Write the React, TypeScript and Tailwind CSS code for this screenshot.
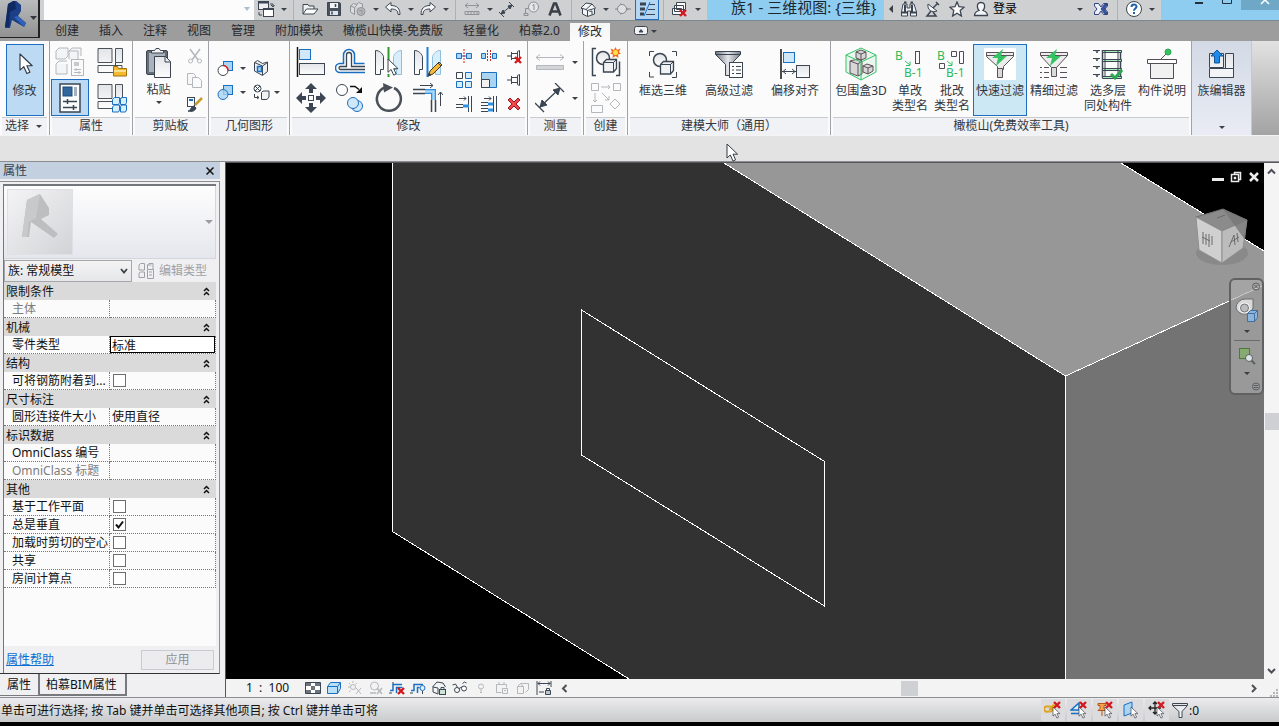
import { Fragment, type ReactNode } from "react";
import clsx from "clsx";

/* ---------- helpers ---------- */

const INK = "#3b4652";
const BLUE = "#1b6fc0";
const SKY = "#a9d5f3";
const FAINT = "#b4b8bc";

function Svg({ w = 16, h = 16, stroke = INK, children }: { w?: number; h?: number; stroke?: string; children: ReactNode }) {
  return (
    <svg width={w} height={h} viewBox={`0 0 ${w} ${h}`} fill="none" stroke={stroke} className="shrink-0" aria-hidden="true">
      {children}
    </svg>
  );
}

function Caret({ className = "w-[11px]" }: { className?: string }) {
  return (
    <span className={clsx("flex shrink-0 items-center justify-center", className)}>
      <svg width="6" height="3" viewBox="0 0 6 3" aria-hidden="true">
        <path d="M0 0h6L3 3z" fill="#3b3f46" />
      </svg>
    </span>
  );
}

function Arrow({ x = 0, y = 0, scale = 1 }: { x?: number; y?: number; scale?: number }) {
  return (
    <path
      d="M0 0V14L3.3 11L6 17L8.6 15.8L6 10.2H10.6Z"
      transform={`translate(${x} ${y}) scale(${scale})`}
      fill="#fff"
      stroke="#333a44"
      strokeLinejoin="round"
    />
  );
}

function RedX({ x = 0, y = 0, s = 7 }: { x?: number; y?: number; s?: number }) {
  return (
    <path d={`M${x} ${y}l${s} ${s}M${x + s} ${y}l${-s} ${s}`} stroke="#d3191f" strokeWidth="2.4" />
  );
}

/* ---------- quick access icons ---------- */

const switchWindows = (
  <Svg w={18} h={18}>
    <rect x="1.5" y="1.5" width="10" height="8" fill="#eee" />
    <path d="M1 2.5h11" strokeWidth="2" />
    <rect x="6.5" y="8.5" width="10" height="8" fill="#fff" />
    <path d="M6 9.5h11M13 4h3v3M14 5l2 2l1.500-2M2 12v3h3" />
  </Svg>
);
const openIcon = (
  <Svg w={18}>
    <path d="M2 13V3.500h5l1 1.500h5v3" fill="#eef0f2" />
    <path d="M2 13l3.500-5H17l-4 5z" fill="#fff" />
  </Svg>
);
const saveIcon = (
  <Svg w={16}>
    <path d="M1.500 1.500h12l1 1v12h-13z" fill="#48525e" />
    <path d="M4 2h8v5H4z" fill="#f2f4f6" stroke="none" />
    <path d="M4 10h8v4H4z" fill="#dfe5ea" stroke="none" />
    <path d="M9.500 3v3M6 10.500v3" strokeWidth="1.500" />
  </Svg>
);
const syncIcon = (
  <Svg w={18} stroke="#8f9499">
    <path d="M1.500 5l3-2.500 3 1 2-2 4 1.500v4M1.500 5v6l4 2.500M1.500 5l4 1.500v7M5.500 6.500l3-3" fill="#dcdddf" />
    <circle cx="12" cy="10.500" r="4" fill="#b5b8bb" />
    <path d="M10 10l3-1v4" />
  </Svg>
);
const undoIcon = (
  <Svg w={18}>
    <path d="M1.500 6L7 1.500v3c6 0 9 3 9 9h-2c0-4-2-5.500-7-5.500v3z" fill="#f6f7f8" />
  </Svg>
);
const redoIcon = (
  <Svg w={18}>
    <path d="M16.500 6L11 1.500v3c-6 0-9 3-9 9h2c0-4 2-5.500 7-5.500v3z" fill="#f6f7f8" />
  </Svg>
);
const rulerIcon = (
  <Svg stroke="#8e9398">
    <path d="M1 4.500h14M4 2L1 4.500 4 7M12 2l3 2.500L12 7M1 10.500h14v3H1zM4 11v2M7 11v2M10 11v2M13 11v2" />
  </Svg>
);
const alignedDim = (
  <Svg w={18}>
    <path d="M3 13L14 4M1 11l5 5M11 1l5 5" />
    <path d="M3 13l2-4 2 3zM14 4l-4 1 2 3z" fill={INK} />
  </Svg>
);
const tagIcon = (
  <Svg stroke="#8b8f94">
    <circle cx="10.500" cy="6" r="5" fill="#e5e5e6" />
    <path d="M9.500 4.500l1.500-1v5.500M5.500 7.500h-3v5M1 12.500h4v2H1z" />
  </Svg>
);
const boldA = (
  <Svg w={14} stroke="#3b4048">
    <path d="M1.500 14.500L6 2.500h2l4.500 12M3.500 10.500h7" strokeWidth="2.600" />
  </Svg>
);
const homeIcon = (
  <Svg>
    <path d="M1 7l5-5 6 1 3.500 4-1 1v5l-7 2.500-5-2.500V8z" fill="#f3f5f6" strokeLinejoin="round" />
    <path d="M1 7l5 1.500L12 3M7.500 9v6M6 8.500l1.500 1 7-2M9.500 10.500l2.500-.5v3.500" />
  </Svg>
);
const sectionIcon = (
  <Svg stroke="#85898e">
    <path d="M5 2l9 6-9 6z" fill="#9b9fa3" stroke="none" />
    <circle cx="7" cy="8" r="4.500" fill="#dedfe0" />
    <path d="M0 8h2M12 8h4" />
  </Svg>
);
const thinLines = (
  <Svg w={18}>
    <path d="M2 3h6M2 8h5M2 13h4" strokeWidth="3" />
    <path d="M11 3.500h6M10 8.500h7M8 13.500h9" />
    <path d="M12 1L6 15" stroke="#1676d2" />
  </Svg>
);
const closeHidden = (
  <Svg w={18}>
    <path d="M5.500 1.500h9v7h-9zM3.500 4.500h9v6h-9zM1.500 7.500h9v6h-9z" fill="#fbfbfb" />
    <RedX x={9} y={9} s={6} />
  </Svg>
);
const binoculars = (
  <Svg w={18} h={18}>
    <path d="M3 4h4v4h3V4h4l2.500 8v4h-6v-5h-3v5h-6v-4z" fill="#f2f4f5" />
    <path d="M4 2.500h2.500M10.500 2.500H13M1.500 12.500h6M10.500 12.500h6M5 5v7M12 5v7" strokeWidth="2" />
  </Svg>
);
const dish = (
  <Svg>
    <path d="M3 3c-1 6 4 9 9 7z" fill="#f4f6f7" />
    <path d="M8 7l5-5M11 1l3 3M6 10l-4 5h9l-3-4" strokeWidth="1.500" />
  </Svg>
);
const star = (
  <Svg>
    <path d="M8 1l2 4.700 5 .5-3.800 3.400L12.400 15 8 12.200 3.600 15l1.200-5.400L1 6.200l5-.5z" fill="#fafafa" strokeWidth="1.300" />
  </Svg>
);
const user = (
  <Svg>
    <path d="M8 1.500c-3 0-4 2-3.500 5 .3 1.500 1 2.500 1.500 3-3 1-4.500 2-4.500 5h13c0-3-1.500-4-4.500-5 .5-.5 1.200-1.500 1.500-3 .5-3-.5-5-3.500-5z" fill="#f4f5f6" strokeWidth="1.300" />
  </Svg>
);
const exchange = (
  <Svg>
    <path d="M1.500 2.500h4L8 6l2.500-3.500h4V5L12 8l2.500 3v2.500h-4L8 10l-2.500 3.500h-4V11L4 8 1.500 5z" fill="#eff1fa" stroke="#2f4480" />
    <path d="M8 8l3.500-4.500h3L11 8l3.500 4.500h-3z" fill="#3458ac" stroke="#2f4480" />
  </Svg>
);
const help = (
  <Svg w={18} h={18}>
    <circle cx="9" cy="9" r="7.500" fill="#fff" />
    <path d="M6.500 7c0-3.500 5-3.200 5-.5 0 2-2.500 2-2.500 4.200M9 12v2" stroke="#1f5fae" strokeWidth="2" />
  </Svg>
);

/* ---------- ribbon icons ---------- */

const modifyArrow = (
  <Svg w={20} h={26}>
    <Arrow x={5} y={3} scale={1.15} />
  </Svg>
);
const famTypes = (
  <Svg w={30} h={30} stroke={FAINT}>
    <path d="M1 4l3-3h9v8l-3 3H1zM14 4l3-3h9v8M1 17l3-3h8M1 17v10h11V17M14 12V4h9v8" fill="#f3f4f5" strokeLinejoin="round" />
    <rect x="16.500" y="12.500" width="12" height="16" fill="#fafafa" />
    <rect x="19" y="15" width="5" height="4" fill="#c5c9cd" stroke="none" />
    <path d="M19 22.500h7M19 25.500h7M21 21v3M24 24v3" />
  </Svg>
);
const boxGrid = (
  <>
    <path d="M1 1.500h14v14H1zM18.500 1.500h7v14h-7zM1 18.500h24v7H1z" fill="url(#face)" stroke="#4a525c" />
    <path d="M18.500 15.500v3" />
  </>
);
const gridFolder = (
  <Svg w={30} h={30}>
    {boxGrid}
    <path d="M16.500 29V19.500h4l1 2h8V29z" fill="#f4b92e" stroke="#a3710b" />
    <path d="M17 24h12" stroke="#fbe08c" strokeWidth="2" />
  </Svg>
);
const gridCubes = (
  <Svg w={30} h={30}>
    {boxGrid}
    <path d="M15.500 16.500l2-2h5v5l-1 2h-6zM23.500 16.500l1-2h5v5l-1 2h-5zM15.500 24l2-2h5v5l-1 2h-6zM23.500 24l1-2h5v5l-1 2h-5z" fill="#d6effc" stroke={BLUE} />
  </Svg>
);
const propsIcon = (
  <Svg w={22} h={30}>
    <rect x="1" y="1" width="20" height="28" fill="#fbfcfd" strokeWidth="1.500" />
    <rect x="4" y="4" width="9" height="9" fill="#31679c" stroke="#1f4a76" />
    <path d="M16.500 4v9" stroke="#a6b1bb" strokeWidth="3" />
    <path d="M4 18.500h14M4 24.500h14M8.500 16v5M14.500 22v5" strokeWidth="1.500" />
  </Svg>
);
const paste = (
  <Svg w={28} h={32}>
    <rect x="1.500" y="3.500" width="21" height="24" rx="1.500" fill="#646d78" />
    <rect x="4" y="6" width="16" height="19" fill="#aab2bb" stroke="none" />
    <path d="M6.500 6V3.500h3L11 1.500h3l1.500 2h3V6z" fill="#f2f3f4" />
    <path d="M9.500 9.500h11l5 5v16h-16z" fill="url(#face)" />
    <path d="M20 10v5h5" />
  </Svg>
);
const cut = (
  <Svg stroke={FAINT}>
    <path d="M3 1l8 11M13 1L5 12" strokeWidth="1.500" />
    <circle cx="3.500" cy="13" r="2" />
    <circle cx="12.500" cy="13" r="2" />
  </Svg>
);
const copy = (
  <Svg stroke={FAINT}>
    <path d="M.500 1.500h6l2 2v9h-8z" fill="#f7f7f7" />
    <path d="M5.500 5.500h6l3 3v7h-9z" fill="#fafafa" />
  </Svg>
);
const matchType = (
  <Svg w={18}>
    <rect x="1.500" y="1.500" width="7" height="9" fill="#fff" />
    <path d="M3 4h4" stroke={BLUE} strokeWidth="2" />
    <path d="M9 9l7-7" stroke="#c99a2c" strokeWidth="2.500" />
    <path d="M2 15c3 0 2-4 6-5l2 2c-1 3-4 4-8 3z" fill={INK} />
  </Svg>
);
const cutGeom = (
  <Svg>
    <rect x="6.500" y="1.500" width="9" height="9" fill={SKY} stroke={BLUE} />
    <circle cx="6" cy="10.500" r="5" fill="#fff" />
    <path d="M6 5.500a5 5 0 0 1 5 5" stroke="#e31b1b" strokeWidth="1.500" />
  </Svg>
);
const joinGeom = (
  <Svg>
    <rect x="6.500" y="1.500" width="9" height="9" fill={SKY} stroke={BLUE} />
    <circle cx="6" cy="10.500" r="5" fill="#a9d5f3" fillOpacity=".8" stroke={BLUE} />
  </Svg>
);
const wallOpening = (
  <Svg>
    <path d="M1.500 2.500l3-2 5 3 5-1.500v9.500l-5 4-8-4.500z" fill="#eef0f2" />
    <path d="M1.500 2.500l8 3.500v9M9.500 6l5-3.500" />
    <rect x="4.500" y="6.500" width="4" height="5" fill={SKY} stroke={BLUE} strokeWidth="1.500" />
  </Svg>
);
const demolish = (
  <Svg w={18}>
    <circle cx="4.500" cy="4.500" r="3.500" fill="#fff" />
    <path d="M2 2l5 5M7 2L2 7M1.500 10v3.500h4M4 12l2 1.500L4 15" />
    <path d="M8.500 8.500l1.500-1.500h6v6l-2 2.500h-5.500z" fill="#f2f2f2" />
  </Svg>
);
const alignIcon = (
  <Svg w={30} h={30}>
    <path d="M1.500 0v30" stroke="#111" strokeWidth="1.500" />
    <rect x="3.500" y="2.500" width="11" height="10" fill="#cfe9fa" stroke={BLUE} />
    <rect x="3.500" y="16.500" width="25" height="11" fill="url(#face)" />
  </Svg>
);
const offsetIcon = (
  <Svg w={30} h={30}>
    <path d="M30 25.500H5a4.500 4.500 0 0 1 0-9h3.500V8a5.500 5.500 0 0 1 11 0v8.500h10" stroke={BLUE} strokeWidth="1.500" />
    <path d="M30 22.500H5.500a1.500 1.500 0 0 1 0-3h6V8a2.500 2.500 0 0 1 5 0v11.500H30" strokeWidth="1.300" />
  </Svg>
);
const mirrorHalf = (
  <>
    <path d="M1.500 3.500c4 0 7 3 8 6v13h-3v5h-5z" fill="url(#face)" />
    <path d="M27.500 3.500c-4 0-7 3-8 6v13h3v5h5z" fill="#d8eefa" stroke="#8fc0e0" />
  </>
);
const mirrorPick = (
  <Svg w={30} h={30}>
    {mirrorHalf}
    <path d="M14.500 0v13M14.500 27v3" stroke="#2f9a2c" strokeWidth="2" />
    <Arrow x={14} y={12} scale={0.95} />
  </Svg>
);
const mirrorDraw = (
  <Svg w={30} h={30}>
    {mirrorHalf}
    <path d="M14.500 0v30" stroke="#1b80dd" strokeWidth="2" />
    <path d="M15 29l2-5 9-9 3 3-9 9z" fill="#f3b73a" stroke="#4a3b1c" />
    <path d="M15 29l1-3 2 2zM25 16l3 3" fill="#333" />
  </Svg>
);
const moveIcon = (
  <Svg w={30} h={30}>
    <path d="M15 0l6 6h-4v4h-4V6H9zM15 30l6-6h-4v-4h-4v4H9zM0 15l6-6v4h4v4H6v4zM30 15l-6-6v4h-4v4h4v4z" fill={INK} stroke="none" />
    <rect x="12.500" y="12.500" width="5" height="5" fill="#fff" />
  </Svg>
);
const copyMove = (
  <Svg w={30} h={30}>
    <circle cx="7" cy="7" r="5.500" fill="#fff" />
    <path d="M15 3.500h5l4 3" stroke="#111" strokeWidth="1.500" />
    <path d="M27 4v6h-6z" fill="#111" stroke="none" />
    <circle cx="22" cy="23" r="5.500" fill="#cfe8f9" stroke={BLUE} />
    <circle cx="18" cy="20" r="5.500" fill="#cfe8f9" stroke={BLUE} />
  </Svg>
);
const rotate = (
  <Svg w={30} h={30}>
    <path d="M20 5a12 12 0 1 1-9-.500" stroke="#4b5058" strokeWidth="2.500" />
    <path d="M9 0l10 4.500-9 5z" fill="#4b5058" stroke="none" />
  </Svg>
);
const trim = (
  <Svg w={30} h={30}>
    <path d="M7 2.500h13M17 0l3 2.500L17 5M27.500 23V9M25 12l2.500-3 2.500 3" />
    <path d="M0 6.500h12M0 10.500h12M18.500 17v12M22.500 17v12" strokeWidth="1.500" />
    <path d="M12 8.500h8.500V17" stroke="#2f8fe0" strokeWidth="5" />
    <path d="M12 8.500h8.500V17" stroke="#a8d8fb" strokeWidth="2.500" />
  </Svg>
);
const splitEl = (
  <Svg>
    <path d="M.500 5.500h5v5h-5zM10.500 5.500h5v5h-5zM5.500 8h5" fill={SKY} stroke={BLUE} />
    <path d="M8 1v14" stroke="#d42020" strokeDasharray="2 1" />
  </Svg>
);
const splitGap = (
  <Svg>
    <path d="M.500 5.500h4v5h-4zM11.500 5.500h4v5h-4z" fill={SKY} stroke={BLUE} />
    <path d="M6.500 2v12M9.500 2v12" stroke="#d42020" strokeDasharray="2 1" />
  </Svg>
);
const pin = (
  <path d="M1 8h4M5.500 4v8M5.500 5.500h6v5h-6M11.500 3.500l2-1v11l-2-1z" fill="#fafafa" />
);
const unpin = (
  <Svg>
    {pin}
    <RedX x={9} y={9} s={6} />
  </Svg>
);
const pinIcon = <Svg>{pin}</Svg>;
const arrayIcon = (
  <Svg>
    <path d="M.500.500h6v6h-6z" fill="#fff" />
    <path d="M9.500.500h6v6h-6zM.500 9.500h6v6h-6zM9.500 9.500h6v6h-6z" fill="#d6edfb" stroke={BLUE} />
  </Svg>
);
const scaleIcon = (
  <Svg>
    <path d="M.500.500h15v15H.500z" fill={SKY} stroke={BLUE} />
    <path d="M.500 7.500h8v8h-8z" fill="#f2f2f2" />
  </Svg>
);
const extendOne = (
  <Svg>
    <path d="M3 2.500h7M8 .500l2 2-2 2M0 8.500h7M0 11.500h7M12.500 0v16M15.500 0v16" />
    <path d="M7 10h6" stroke="#2f8fe0" strokeWidth="3" />
  </Svg>
);
const extendMany = (
  <Svg>
    <path d="M3 2.500h7M8 .500l2 2-2 2M0 6.500h7M0 9.500h7M0 12.500h7M0 15.500h7M12.500 0v16M15.500 0v16" />
    <path d="M7 8h5M7 14h5" stroke="#2f8fe0" strokeWidth="3" />
  </Svg>
);
const deleteIcon = (
  <Svg>
    <path d="M2 4l2-2 4 4 4-4 2 2-4 4 4 4-2 2-4-4-4 4-2-2 4-4z" fill="#f0474c" stroke="#a3161b" />
  </Svg>
);
const measureFaint = (
  <Svg w={30} h={18} stroke={FAINT}>
    <path d="M1 4.500h28M5 1.500l-4 3 4 3M25 1.500l4 3-4 3" />
    <path d="M1.500 12.500h27v4h-27z" fill="#d3d5d7" />
  </Svg>
);
const measureBig = (
  <Svg w={30} h={30}>
    <path d="M5 24L25 5M0 20l9 9M20 0l9 9" strokeWidth="1.300" />
    <path d="M5 24l2-7 5 5zM25 5l-7 2 5 5z" fill={INK} />
  </Svg>
);
const groupShapes = (
  <>
    <circle cx="12" cy="11" r="6.500" fill="url(#face)" strokeWidth="1.500" />
    <path d="M12.500 15.500l3-3h10v9l-3 3.500h-10z" fill="#f0f2f4" strokeWidth="1.300" />
    <path d="M22 16l3.500-3.500M12.500 15.500h10V25" />
  </>
);
const createGroup = (
  <Svg w={30} h={30}>
    <path d="M5 1.500H1.500v27H5M25 28.500h3.500v-14" strokeWidth="1.500" />
    {groupShapes}
    <path d="M24.500 0l1.500 3 3.500-1.500L28 5l2 1.500-3 1 .500 3.500-3-2-3 2 .500-3.500-3-1L21 5l-1.500-3.500L23 3z" fill="#f26a1b" stroke="none" />
    <circle cx="24.500" cy="5.500" r="2.500" fill="#ffe14a" stroke="none" />
  </Svg>
);
const createSimilar = (
  <Svg w={30} h={30} stroke={FAINT}>
    <path d="M.500.500h7v7h-7zM22.500.500h7v7h-7zM.500 22.500h11v7H.500zM24 16l5 5-5 5-5-5zM10 4h9M17 2l2 2-2 2M4 10v9M2 17l2 2 2-2M11 10l7 7M18 13v4h-4" />
  </Svg>
);
const frame3d = (
  <Svg w={30} h={30}>
    <path d="M1.500 7V2.500H6M24 2.500h4.500V7M1.500 23v5H6M24 28.500h4.500V23" />
    {groupShapes}
  </Svg>
);
const funnelList = (
  <Svg w={30} h={30}>
    <path d="M1.500 2.500h25v3l-10 10v11h-5v-11l-10-10z" fill="url(#funnel)" />
    <path d="M1.500 5.500h25" />
    <rect x="15.500" y="13.500" width="13" height="15" fill="#fff" />
    <path d="M18 17.500h2M18 21h2M18 24.500h2M22 17.500h5M22 21h5M22 24.500h5" />
  </Svg>
);
const offsetAlign = (
  <Svg w={30} h={32}>
    <path d="M1 1v30" stroke="#111" strokeWidth="1.500" />
    <rect x="3.500" y="4.500" width="11" height="10" fill="#cfe9fa" stroke={BLUE} />
    <rect x="16.500" y="17.500" width="13" height="12" fill="url(#face)" />
    <path d="M2 23.500h14M6 21l-3 2.500L6 26M12 21l3 2.500-3 2.500" />
  </Svg>
);
const boundingBox = (
  <Svg w={32} h={34}>
    <path d="M1 8l15-7 15 7v17l-15 8L1 25z" fill="#e9f8ee" stroke="none" />
    <path d="M5 14l8-2 4 2v13l-4 2-8-3zM11 5l5-2 5 2v6l-5 2-5-2zM18 19l4-2 6 2v5l-5 3-5-2z" fill="#d9d6d8" stroke="#5a5258" />
    <path d="M5 14l8 3 4-3M13 17v12M11 5l5 2 5-2M16 7v6M18 19l5 2 5-2M23 21v6" stroke="#5a5258" />
    <path d="M16 1l15 7v17l-15 8L1 25V8zM1 8l15 7 15-7M16 15v18" stroke="#37c268" />
  </Svg>
);
const renameOne = (
  <Svg w={30} h={30}>
    <path d="M10 12l5 4M15 12.500v4h-4" stroke="#37c268" />
    <rect x="20.500" y="2.500" width="4" height="12" stroke="#544a5c" />
    <g fill="#2fba60" stroke="none" className="text-[12px]">
      <text x="0" y="11">B</text>
      <text x="9" y="28">B-1</text>
    </g>
  </Svg>
);
const renameMany = (
  <Svg w={30} h={30}>
    <path d="M10 12l5 4M15 12.500v4h-4" stroke="#37c268" />
    <path d="M22.500 2.500h4v12h-4zM14.500 2.500h5v5h-5zM2.500 14.500h5v5h-5z" stroke="#544a5c" />
    <g fill="#2fba60" stroke="none" className="text-[12px]">
      <text x="0" y="11">B</text>
      <text x="9" y="28">B-1</text>
    </g>
  </Svg>
);
const bolt = <path d="M19 1l-11 9h6l-2 8 11-10h-6z" fill="#35c263" stroke="none" />;
const fastFilter = (
  <span className="bg-white">
    <Svg w={32} h={32} stroke="#5a5258">
      <path d="M2.500 4.500h27v4l-10 10v3h-6v-3l-11-10z" fill="#ececec" />
      <path d="M2.500 7.500h27M13.500 20.500h5v9h-5z" fill="#dadada" />
      {bolt}
    </Svg>
  </span>
);
const fineFilter = (
  <Svg w={32} h={32} stroke="#5a5258">
    <path d="M2.500 4.500h27v3l-11 12h-5l-11-12z" fill="#ececec" />
    <path d="M2.500 7.500h27M13.500 19.500h5v9h-5z" fill="#dadada" />
    <path d="M2 19.500h2M6 19.500h5M2 24.500h2M6 24.500h5M2 29.500h2M6 29.500h5M22 19.500h7M22 24.500h7M22 29.500h7" />
    {bolt}
  </Svg>
);
const floors = (
  <Svg w={32} h={32}>
    <path d="M10.500 2v28M28.500 2v28" strokeWidth="1.500" />
    <path d="M10.500 2.500h19v2h-19zM10.500 11.500h19v2h-19zM10.500 20.500h19v2h-19zM10.500 28.500h19v2h-19z" fill="#a8efbd" />
    <path d="M1 2.500h7M1 10.500h7M1 18.500h7M1 26.500h7M4 3l1 2 1-2M4 11l1 2 1-2M4 19l1 2 1-2M4 27l1 2 1-2M26 3v26M13 3v26" />
    <path d="M19 26l4 4 7-8" stroke="#2da552" strokeWidth="3" />
  </Svg>
);
const podium = (
  <Svg w={32} h={32} stroke="#544f56">
    <path d="M15 11l6-6" />
    <circle cx="22" cy="4" r="3" fill="#35c263" stroke="#2da552" />
    <path d="M4.500 14.500h23v16h-23z" fill="#f1f1f1" />
    <path d="M1.500 11.500h29v4h-29z" fill="#fff" />
  </Svg>
);
const familyEditor = (
  <Svg w={28} h={30}>
    <path d="M2.500 4.500h14v14h-14zM18.500 4.500h8v24h-8z" fill="url(#face)" />
    <path d="M2.500 19.500h24v9h-24z" fill="#f3f4f6" />
    <path d="M10 1l6 6h-3.500v7h-5V7H4z" fill="#1c8bea" stroke="#12569a" />
  </Svg>
);

/* ---------- ribbon ---------- */

function Tool({ label, children, className }: { label: string; children: ReactNode; className?: string }) {
  return (
    <button type="button" aria-label={label} className={clsx("flex items-center justify-center", className)}>
      {children}
    </button>
  );
}

function BigTool({ icon, lines, className }: { icon: ReactNode; lines: string[]; className?: string }) {
  return (
    <button type="button" className={clsx("flex h-[72px] flex-col items-center border border-transparent", className)}>
      <span className="flex h-[38px] items-center justify-center">{icon}</span>
      {lines.map((l) => (
        <span key={l} className="leading-[15px] whitespace-nowrap">{l}</span>
      ))}
    </button>
  );
}

function Panel({ title, className, children }: { title: ReactNode; className: string; children: ReactNode }) {
  return (
    <section className={clsx("flex shrink-0 flex-col border-r border-[#9fa2a6]", className)}>
      <div className="flex flex-1 items-start justify-center pt-[3px]">{children}</div>
      <h2 className="mx-0.5 flex h-[18px] items-start justify-center border-t border-[#c9cbce] bg-[#f1f2f5] leading-4">{title}</h2>
    </section>
  );
}

function Ribbon() {
  return (
    <div className="flex h-[94px] shrink-0 bg-[#fbfbfb] text-[#33373d]">
      <Panel
        title={<span className="flex gap-1">选择 <Caret /></span>}
        className="w-[50px]"
      >
        <BigTool icon={modifyArrow} lines={["修改"]} className="w-[38px] border-[#1e6ec0]! bg-[#bcdaf3]" />
      </Panel>

      <Panel title="属性" className="w-[83px]">
        <div className="grid h-[72px] grid-cols-2 gap-x-1">
          <Tool label="族类型" className="w-[38px]">{famTypes}</Tool>
          <Tool label="族类别和族参数" className="w-[38px]">{gridFolder}</Tool>
          <Tool label="属性" className="w-[38px] border border-[#1e6ec0] bg-[#bcdaf3]">{propsIcon}</Tool>
          <Tool label="类型属性" className="w-[38px]">{gridCubes}</Tool>
        </div>
      </Panel>

      <Panel title="剪贴板" className="w-[76px]">
        <button type="button" className="ml-1 flex h-[72px] w-10 flex-col items-center">
          <span className="flex h-[38px] items-center">{paste}</span>
          <span className="leading-4">粘贴</span>
          <Caret className="h-2" />
        </button>
        <div className="ml-1 grid h-[72px]">
          <Tool label="剪切" className="w-6">{cut}</Tool>
          <Tool label="复制" className="w-6">{copy}</Tool>
          <Tool label="匹配类型属性" className="w-6">{matchType}</Tool>
        </div>
      </Panel>

      <Panel title="几何图形" className="w-[81px]">
        <div className="mt-3 ml-2 grid grid-cols-2">
          <Tool label="剪切几何图形" className="h-6 w-[38px] justify-start! gap-1">{cutGeom}<Caret /></Tool>
          <Tool label="洞口" className="h-6 w-[38px] justify-start!">{wallOpening}</Tool>
          <Tool label="连接几何图形" className="h-6 w-[38px] justify-start! gap-1">{joinGeom}<Caret /></Tool>
          <Tool label="拆除" className="h-6 w-[38px] justify-start!">{demolish}<Caret /></Tool>
        </div>
      </Panel>

      <Panel title="修改" className="w-[238px]">
        <div className="grid h-[72px] grid-cols-4">
          <Tool label="对齐" className="w-[39px]">{alignIcon}</Tool>
          <Tool label="偏移" className="w-[39px]">{offsetIcon}</Tool>
          <Tool label="镜像 - 拾取轴" className="w-[39px]">{mirrorPick}</Tool>
          <Tool label="镜像 - 绘制轴" className="w-[39px]">{mirrorDraw}</Tool>
          <Tool label="移动" className="w-[39px]">{moveIcon}</Tool>
          <Tool label="复制图元" className="w-[39px]">{copyMove}</Tool>
          <Tool label="旋转" className="w-[39px]">{rotate}</Tool>
          <Tool label="修剪/延伸为角" className="w-[39px]">{trim}</Tool>
        </div>
        <div className="ml-1 grid h-[72px] grid-cols-3">
          <Tool label="拆分图元" className="w-[25px]">{splitEl}</Tool>
          <Tool label="用间隙拆分" className="w-[25px]">{splitGap}</Tool>
          <Tool label="解锁" className="w-[25px]">{unpin}</Tool>
          <Tool label="阵列" className="w-[25px]">{arrayIcon}</Tool>
          <Tool label="缩放" className="w-[25px]">{scaleIcon}</Tool>
          <Tool label="锁定" className="w-[25px]">{pinIcon}</Tool>
          <Tool label="修剪单个图元" className="w-[25px]">{extendOne}</Tool>
          <Tool label="修剪多个图元" className="w-[25px]">{extendMany}</Tool>
          <Tool label="删除" className="w-[25px]">{deleteIcon}</Tool>
        </div>
      </Panel>

      <Panel title="测量" className="w-14">
        <div className="ml-1 grid h-[72px] grid-rows-2">
          <Tool label="测量" className="gap-1">{measureFaint}<Caret /></Tool>
          <Tool label="对齐尺寸标注" className="gap-1">{measureBig}<Caret /></Tool>
        </div>
      </Panel>

      <Panel title="创建" className="w-11">
        <div className="grid h-[72px] grid-rows-2">
          <Tool label="创建组">{createGroup}</Tool>
          <Tool label="创建类似">{createSimilar}</Tool>
        </div>
      </Panel>

      <Panel title="建模大师（通用）" className="w-[203px]">
        <BigTool icon={frame3d} lines={["框选三维"]} className="w-[66px]" />
        <BigTool icon={funnelList} lines={["高级过滤"]} className="w-[66px]" />
        <BigTool icon={offsetAlign} lines={["偏移对齐"]} className="w-[66px]" />
      </Panel>

      <Panel title="橄榄山(免费效率工具)" className="w-[361px]">
        <BigTool icon={boundingBox} lines={["包围盒3D"]} className="w-14" />
        <BigTool icon={renameOne} lines={["单改", "类型名"]} className="w-[42px]" />
        <BigTool icon={renameMany} lines={["批改", "类型名"]} className="w-[42px]" />
        <BigTool icon={fastFilter} lines={["快速过滤"]} className="w-[54px] border-[#1e6ec0]! bg-[#cce8f5]" />
        <BigTool icon={fineFilter} lines={["精细过滤"]} className="w-[54px]" />
        <BigTool icon={floors} lines={["选多层", "同处构件"]} className="w-[54px]" />
        <BigTool icon={podium} lines={["构件说明"]} className="w-[54px]" />
      </Panel>

      <section className="flex w-[60px] shrink-0 flex-col items-center justify-between border-r border-[#c4c9d0] bg-linear-to-b from-[#d3dae5] to-[#e9ecf5] pt-[3px] pb-1">
        <BigTool icon={familyEditor} lines={["族编辑器"]} />
        <Caret className="h-2" />
      </section>
      <div className="flex-1 bg-linear-to-b from-[#e2e2e2] to-[#a3a3a3]" />
    </div>
  );
}

/* ---------- title bar and tabs ---------- */

function Quick({ label, children, active }: { label: string; children: ReactNode; active?: boolean }) {
  return (
    <button
      type="button"
      aria-label={label}
      className={clsx("flex h-5 w-6 shrink-0 items-center justify-center pb-0.5", active && "border border-t-0 border-[#1e6ec0] bg-[#b5d6f2]")}
    >
      {children}
    </button>
  );
}

const Sep = () => <span className="mx-1 h-5 w-px shrink-0 bg-[#aeb0b2]" />;

function TitleBar() {
  return (
    <header className="flex h-[21px] shrink-0 border-b border-[#7c8790] bg-[#cfd0d2]">
      <div className="w-11 shrink-0" />
      <div className="flex w-[210px] shrink-0 justify-end bg-[#fcfcfc]">
        <svg width="12" height="18" viewBox="0 0 12 18" aria-hidden="true">
          <path d="M2 7h6L5 11z" fill="#a9bfcd" />
        </svg>
      </div>
      <div className="flex shrink-0 items-start pr-1">
        <Quick label="切换窗口">{switchWindows}</Quick>
        <Caret className="h-[18px] w-[11px]" />
        <Sep />
        <Quick label="打开">{openIcon}</Quick>
        <Quick label="保存">{saveIcon}</Quick>
        <Quick label="同步">{syncIcon}</Quick>
        <Caret className="h-[18px] w-[11px]" />
        <Quick label="放弃">{undoIcon}</Quick>
        <Caret className="h-[18px] w-[11px]" />
        <Quick label="重做">{redoIcon}</Quick>
        <Caret className="h-[18px] w-[11px]" />
        <Sep />
        <Quick label="测量">{rulerIcon}</Quick>
        <Caret className="h-[18px] w-[11px]" />
        <Quick label="尺寸标注">{alignedDim}</Quick>
        <Quick label="标记">{tagIcon}</Quick>
        <Quick label="文字">{boldA}</Quick>
        <Sep />
        <Quick label="默认三维视图">{homeIcon}</Quick>
        <Caret className="h-[18px] w-[11px]" />
        <Quick label="剖面">{sectionIcon}</Quick>
        <Quick label="细线" active>{thinLines}</Quick>
        <Sep />
        <Quick label="关闭隐藏窗口">{closeHidden}</Quick>
        <Caret className="h-[18px] w-[11px]" />
      </div>
      <h1 className="min-w-0 flex-1 bg-[#8fcdf0] pr-1 pl-6 text-[15px] leading-[14px] whitespace-nowrap text-[#1c2730]">
        族1 - 三维视图: {"{三维}"}
      </h1>
      <div className="flex w-[277px] shrink-0 items-start">
        <span className="flex h-[18px] w-[13px] items-center justify-center">
          <svg width="4" height="8" viewBox="0 0 4 8" aria-hidden="true">
            <path d="M4 0v8L0 4z" fill="#3b3f46" />
          </svg>
        </span>
        <Quick label="搜索">{binoculars}</Quick>
        <Quick label="通讯中心">{dish}</Quick>
        <Quick label="收藏夹">{star}</Quick>
        <Quick label="账户">{user}</Quick>
        <button type="button" className="h-[18px] leading-[18px]">登录</button>
        <span className="flex-1" />
        <Caret className="mr-1 h-[18px] w-[11px]" />
        <Quick label="Exchange Apps">{exchange}</Quick>
        <Sep />
        <Quick label="帮助">{help}</Quick>
        <Caret className="mr-1 h-[18px] w-[11px]" />
      </div>
      <div className="flex w-[118px] shrink-0 items-start justify-end bg-[#8fcdf0]">
        <button type="button" aria-label="最小化" className="flex w-7 justify-center">
          <Svg w={10} h={12} stroke="#22303a"><path d="M1 3h8" strokeWidth="2" /></Svg>
        </button>
        <button type="button" aria-label="最大化" className="flex w-7 justify-center">
          <Svg w={10} h={12} stroke="#22303a"><path d="M.500 0v3.500h9V0" /></Svg>
        </button>
        <button type="button" aria-label="关闭" className="flex h-2.5 w-[38px] justify-center bg-[#6fa8c6] pl-2.5">
          <Svg w={10} h={6} stroke="#fff"><path d="M1 4l4-4 4 4" strokeWidth="1.500" /></Svg>
        </button>
      </div>
    </header>
  );
}

const tabs = ["创建", "插入", "注释", "视图", "管理", "附加模块", "橄榄山快模-免费版", "轻量化", "柏慕2.0"];

function TabRow() {
  return (
    <nav className="flex h-5 shrink-0 items-end bg-[#9d9d9d] pl-[45px] text-[#26282b]">
      {tabs.map((t) => (
        <button key={t} type="button" className="h-5 px-2.5 leading-5 whitespace-nowrap">
          {t}
        </button>
      ))}
      <button type="button" className="h-[18px] bg-linear-to-b from-[#f4f5f6] to-[#fbfbfb] px-2 leading-[16px]">修改</button>
      <button type="button" aria-label="最小化功能区" className="ml-6 flex h-5 items-center">
        <Svg w={15} h={10}>
          <rect x=".500" y=".500" width="13" height="8" rx="2" fill="#f3f3f3" />
          <path d="M5 6l2-2.500L9 6z" fill={INK} />
        </Svg>
        <Caret />
      </button>
    </nav>
  );
}

function AppButton() {
  return (
    <button type="button" aria-label="应用程序菜单" className="absolute top-0 left-0 h-[38px] w-10 border-r-2 border-b border-[#222] bg-linear-to-b from-[#b9bbbd] to-[#929292]">
      <svg width="38" height="36" viewBox="0 0 38 36" aria-hidden="true">
        <path d="M8 3l7-4 6 5v6l-3 5 8 7-2 4-12-7-2 8H5z" fill="#1d3f86" />
        <path d="M8 3l7-4 1 9-6 3-1 15H5z" fill="#0f2a63" />
        <path d="M14 16l4-1 8 7-2 4z" fill="#2f62b8" />
        <path d="M30 15h7l-3.500 4z" fill="#33373d" />
      </svg>
    </button>
  );
}

/* ---------- properties palette ---------- */

type Row = { name: string; value?: string; check?: boolean; edit?: boolean; dim?: boolean };

const groups: { title: string; rows: Row[] }[] = [
  { title: "限制条件", rows: [{ name: "主体", dim: true }] },
  { title: "机械", rows: [{ name: "零件类型", value: "标准", edit: true }] },
  { title: "结构", rows: [{ name: "可将钢筋附着到...", check: false }] },
  { title: "尺寸标注", rows: [{ name: "圆形连接件大小", value: "使用直径" }] },
  { title: "标识数据", rows: [{ name: "OmniClass 编号" }, { name: "OmniClass 标题", dim: true }] },
  {
    title: "其他",
    rows: [
      { name: "基于工作平面", check: false },
      { name: "总是垂直", check: true },
      { name: "加载时剪切的空心", check: false },
      { name: "共享", check: false },
      { name: "房间计算点", check: false },
    ],
  },
];

function Value({ row }: { row: Row }) {
  if (row.check !== undefined) {
    return (
      <span className="mt-0.5 ml-[3px] grid size-[13px]">
        <input
          type="checkbox"
          aria-label={row.name}
          defaultChecked={row.check}
          className="peer col-start-1 row-start-1 size-[13px] appearance-none border border-[#6d6d6d] bg-white"
        />
        <svg width="13" height="13" viewBox="0 0 13 13" className="pointer-events-none invisible col-start-1 row-start-1 peer-checked:visible" aria-hidden="true">
          <path d="M3 6.500L5.500 9.500 10 3.500" fill="none" stroke="#111" strokeWidth="2" />
        </svg>
      </span>
    );
  }
  if (row.edit) {
    return <input aria-label={row.name} defaultValue={row.value} className="block h-[17px] w-full border border-black bg-white pl-px leading-[15px]" />;
  }
  return <span className="block pl-0.5">{row.value}</span>;
}

function PropertyTable() {
  return (
    <table className="w-full table-fixed border-separate border-spacing-0 leading-[17px]">
      <colgroup>
        <col className="w-[106px]" />
        <col />
      </colgroup>
      <tbody>
        {groups.map((g) => (
          <Fragment key={g.title}>
            <tr className="h-[18px] bg-[#dadada]">
              <th colSpan={2} className="p-0 text-left font-normal">
                <button type="button" className="flex h-[18px] w-full items-center justify-between pr-1.5 pl-0.5">
                  {g.title}
                  <Svg w={7} h={9} stroke="#111">
                    <path d="M1 4l2.500-2.500L6 4M1 8l2.500-2.500L6 8" strokeWidth="1.500" />
                  </Svg>
                </button>
              </th>
            </tr>
            {g.rows.map((r) => (
              <tr key={r.name} className="h-[18px]">
                <td className={clsx("overflow-hidden border-r border-b border-dotted border-[#777] p-0 pl-2 whitespace-nowrap", r.dim && "text-[#7d7d7d]")}>
                  {r.name}
                </td>
                <td className="border-r border-b border-dotted border-[#777] p-0 align-top">
                  <Value row={r} />
                </td>
              </tr>
            ))}
          </Fragment>
        ))}
      </tbody>
    </table>
  );
}

function Properties() {
  return (
    <aside className="flex w-[220px] shrink-0 flex-col bg-[#f0f0f2] text-[#111]">
      <div className="flex h-[17px] shrink-0 items-center justify-between bg-[#c3d0df] pr-1.5 pl-[3px] text-[#33414f]">
        属性
        <button type="button" aria-label="关闭属性面板">
          <Svg w={8} h={8} stroke="#111"><path d="M.500.500l7 7M7.500.500l-7 7" strokeWidth="1.500" /></Svg>
        </button>
      </div>
      <div className="mt-0.5 flex min-h-0 flex-1 flex-col border-t border-r border-b border-[#8a8d91] border-b-[#333] pr-[3px] pl-[3px]">
        <div className="mt-0.5 flex min-h-0 flex-1 flex-col border-t-2 border-l border-[#73777b]">
          <div className="flex h-[73px] shrink-0 items-center justify-between border-r border-b border-[#d5d6da] bg-linear-to-b from-[#fdfdfd] to-[#e6e7ee] pr-0.5 pl-[3px]">
            <svg width="66" height="66" viewBox="0 0 66 66" aria-hidden="true">
              <rect x=".5" y=".5" width="65" height="65" fill="url(#thumb)" stroke="#dfe0e6" />
              <path d="M20 11l13-6 9 14v7l-8 4 17 15-4 4-23-16-2 15h-7z" fill="#bcbec0" />
              <path d="M20 11l13-6-4 24-7 4-2 15h-5z" fill="#c8c9cb" />
            </svg>
            <svg width="8" height="4" viewBox="0 0 8 4" aria-hidden="true">
              <path d="M0 0h8L4 4z" fill="#9b9da1" />
            </svg>
          </div>
          <div className="flex h-[23px] shrink-0 items-center">
            <div className="grid w-[128px]">
              <select aria-label="族类型选择" className="col-start-1 row-start-1 h-[22px] appearance-none border border-[#a5a7aa] bg-linear-to-b from-[#f4f4f5] to-[#e5e6e8] pl-[3px]">
                <option>族: 常规模型</option>
              </select>
              <span className="pointer-events-none col-start-1 row-start-1 flex items-center justify-end pr-1">
                <Svg w={8} h={6} stroke="#3c4148"><path d="M1 1l3 3.500L7 1" strokeWidth="1.800" /></Svg>
              </span>
            </div>
            <button type="button" className="flex items-center gap-1 pl-1.5 text-[#9ea1a5]">
              <Svg w={17} h={17} stroke="#9ea1a5">
                <path d="M1 3l1.500-1.500h4V8H1zM9.500 3L11 1.500h4V7M1 11l1.500-1h4v5.500H1zM9.500 7V3h4" />
                <path d="M9.500 7.500h6v9h-6zM11 10h3M11 13h3" />
              </Svg>
              编辑类型
            </button>
          </div>
          <div className="min-h-0 flex-1 bg-[#fbfbfb]">
            <PropertyTable />
          </div>
          <div className="flex h-[27px] shrink-0 items-center justify-between pr-0.5 pl-0.5">
            <a href="#help" className="text-[#0a6fd1] underline">属性帮助</a>
            <button type="button" disabled className="h-5 w-[73px] border border-[#c9cbce] bg-[#ececef] leading-[18px] text-[#8d9095]">应用</button>
          </div>
        </div>
      </div>
      <div className="flex h-[23px] shrink-0 items-start">
        <button type="button" className="h-[22px] border-r border-b border-[#77797d] px-[7px] leading-[22px]">属性</button>
        <button type="button" className="h-[22px] border-r-2 border-b-2 border-l border-[#77797d] pr-2 pl-1.5 leading-[22px] whitespace-nowrap">柏慕BIM属性</button>
      </div>
    </aside>
  );
}

/* ---------- 3d view ---------- */

function Scene() {
  return (
    <svg className="absolute inset-0 h-full w-full" viewBox="0 0 1038 516" preserveAspectRatio="xMinYMin slice" shapeRendering="crispEdges" role="img" aria-label="三维视图">
      <rect width="1038" height="516" fill="#000" />
      <path d="M166 0H499L840 213V516H404L166 368Z" fill="#323232" />
      <path d="M499 0H895L1038 88V123L840 213Z" fill="#979797" />
      <path d="M840 213L1038 123V516H840Z" fill="#737373" />
      <path
        d="M166.500 0V368.500L403 516M498 0L839.500 213V516M839.500 213L1038 122M895 0L1038 88M355.500 147L598.500 298.500V443L355.500 292Z"
        fill="none"
        stroke="#fff"
      />
    </svg>
  );
}

function ViewCube() {
  return (
    <svg width="58" height="62" viewBox="0 0 58 62" className="absolute top-[44px] right-[13px]" aria-hidden="true">
      <ellipse cx="29" cy="46" rx="26" ry="12" fill="#777" opacity=".45" />
      <path d="M3 10L30 2l24 11-25 11z" fill="#8b8b8b" stroke="#6e6e6e" />
      <path d="M3 10l26 14v32L6 43z" fill="#d0d0d0" stroke="#909090" />
      <path d="M54 13L29 24v32l21-15z" fill="#bcbcbc" stroke="#909090" />
      <path d="M30 2l24 11-2 20z" fill="#777" opacity=".8" />
      <path d="M10 25v12M13 27v11M16 27v13M19 29v9M9 30l8 4M36 40l5-12 1 10M44 26l1 9M38 35l8-5M24 11l8-3" stroke="#6b6b6b" fill="none" />
    </svg>
  );
}

function NavBar() {
  return (
    <div className="absolute top-[115px] right-0 flex h-[117px] w-[35px] flex-col items-center justify-between rounded-md border-2 border-[#5f6163] bg-[#a9a9a9]/70 py-0.5">
      <Svg w={27} h={9} stroke="#5c5e60">
        <circle cx="23" cy="4.500" r="3.500" />
        <path d="M21.500 3l3 3M24.500 3l-3 3" />
      </Svg>
      <button type="button" aria-label="控制盘">
        <Svg w={26} h={26} stroke="#6a6d70">
          <path d="M2 11a9 9 0 0 1 9-9h8v9a9 9 0 0 1-17 0z" fill="#d9d9d9" />
          <circle cx="10.500" cy="11" r="4.500" fill="#bdbdbd" stroke="#f2f2f2" strokeWidth="2" />
          <circle cx="10.500" cy="11" r="4" />
          <path d="M13.500 16.500l3-3h7v7l-3 4h-7zM13.500 16.500h7v8M20.500 16.500l3-3" fill="#8db4dc" stroke="#41709f" />
        </Svg>
      </button>
      <Caret className="h-1" />
      <span className="h-px w-[26px] bg-[#6a6c6e]" />
      <button type="button" aria-label="缩放区域">
        <Svg w={18} h={18} stroke="#5c5e60">
          <rect x="1.500" y="1.500" width="10" height="10" fill="#85ab73" stroke="#4c7a3a" />
          <path d="M13 13l4 4" strokeWidth="2" />
          <circle cx="11" cy="11" r="3.500" fill="#dce6ea" />
        </Svg>
      </button>
      <Caret className="h-1" />
      <Svg w={27} h={9} stroke="#5c5e60">
        <circle cx="23" cy="4.500" r="3.500" />
        <path d="M21 3.500h4M21 5.500h4" />
      </Svg>
    </div>
  );
}

const viewTools: { label: string; icon: ReactNode }[] = [
  { label: "详细程度", icon: <Svg><path d="M.500 2.500h15v11H.500z" fill="#fff" /><path d="M1 3h5v3H1zM10 3h5v3h-5zM6 6h4v4H6zM1 10h5v3H1zM10 10h5v3h-5z" fill="#6b7580" stroke="none" /></Svg> },
  { label: "视觉样式", icon: <Svg stroke={BLUE}><path d="M1.500 6.500l3-4h10v6l-3 5h-10zM1.500 6.500h10v7M11.500 6.500l3-4" fill="#b9e0f7" /></Svg> },
  { label: "日光路径", icon: <Svg stroke={FAINT}><circle cx="6" cy="7" r="2.500" /><path d="M6 1v2M1 7h2M2 3l1.500 1.500M10 3L8.500 4.500M2 12l1.500-1.500M9 8l5 6M14 8l-5 6" /></Svg> },
  { label: "阴影", icon: <Svg stroke={FAINT}><circle cx="6.500" cy="6" r="4" /><path d="M2 13h6M9 8l5 6M14 8l-5 6" strokeWidth="1.500" /></Svg> },
  { label: "裁剪视图", icon: <Svg><path d="M1 10.500h3v-6h9M7.500 13V7.500h6" stroke={BLUE} strokeWidth="1.500" /><path d="M0 13h3M4 2v2" /><RedX x={9} y={8} s={6} /></Svg> },
  { label: "显示裁剪区域", icon: <Svg><path d="M1 10.500h3v-6h9M7.500 13V7.500h2" stroke={BLUE} strokeWidth="1.500" /><path d="M0 13h3" /><circle cx="12.500" cy="8" r="2.500" fill="#e1f2fc" stroke={BLUE} /><path d="M12.500 11v3" /></Svg> },
  { label: "锁定三维视图", icon: <Svg><path d="M1.500 7L6 2l6 1 2.500 4M2 7v5l5 2V8L2 7" fill="#f1f3f4" /><rect x="8.500" y="9.500" width="6" height="5" fill="#cfe4d8" /><path d="M10 9V7.500h3V9" /></Svg> },
  { label: "临时隐藏/隔离", icon: <Svg><path d="M.500 5l3-1 3 5M14.500 3l-2-1-2 1.500M7 8.500l3-1.500" /><circle cx="5" cy="10" r="2.500" fill="#fff" /><circle cx="12" cy="8.500" r="2.500" fill="#fff" /></Svg> },
  { label: "显示隐藏的图元", icon: <Svg stroke={FAINT}><circle cx="8" cy="6.500" r="2.500" /><path d="M8 9v4M7 12.500h2" /></Svg> },
  { label: "临时视图属性", icon: <Svg stroke={FAINT}><path d="M2.500 4.500h10v3M2.500 4.500v8h5M5 2v2M10 2v2" /><path d="M8.500 8.500h5v5h-5zM10 10.500h2" /></Svg> },
  { label: "分析模型", icon: <Svg stroke={FAINT}><path d="M2.500 6.500h6v7h-6zM2.500 6.500l3-3h8v6l-3 3M5.500 4l3 2.500" /></Svg> },
  { label: "显示约束", icon: <Svg><path d="M1 1v14M15 1v6M2 3.500h12M4 1.500l-2 2 2 2M12 1.500l2 2-2 2M3 12h5" /><path d="M9.500 10.500h5v4h-5z" fill="#bcc5cc" /><path d="M10.500 10V8.500h3V10" /></Svg> },
];

function Chevron({ d }: { d: string }) {
  return (
    <Svg w={9} h={9} stroke="#4c5056">
      <path d={d} strokeWidth="2" />
    </Svg>
  );
}

function Viewport() {
  return (
    <main className="ml-[5px] flex min-w-0 flex-1 flex-col border-t border-l border-[#55575a] bg-[#f3f3f4]">
      <div className="flex min-h-0 flex-1">
        <div className="relative min-w-0 flex-1 overflow-hidden">
          <Scene />
          <div className="absolute top-2 right-1 flex items-center gap-1.5">
            <button type="button" aria-label="最小化视图">
              <Svg w={12} h={12}><path d="M0 8.500h12" stroke="#ececec" strokeWidth="3" /></Svg>
            </button>
            <button type="button" aria-label="还原视图">
              <Svg w={12} h={12} stroke="#ececec"><path d="M4.500 3V1.500h6v7H9M1.500 3.500h7v7h-7zM4.500 6.500h1v1h-1z" strokeWidth="1.500" /></Svg>
            </button>
            <button type="button" aria-label="关闭视图">
              <Svg w={12} h={12} stroke="#ececec"><path d="M2 2l8 8M10 2l-8 8" strokeWidth="2.500" /></Svg>
            </button>
          </div>
          <ViewCube />
          <NavBar />
        </div>
        <div className="flex w-[15px] shrink-0 flex-col items-center justify-between bg-[#f4f4f5] py-1">
          <Chevron d="M1 6.500L4.500 3 8 6.500" />
          <span className="h-[17px] w-3.5 bg-[#cfd0d3]" />
          <Chevron d="M1 3l3.500 3.500L8 3" />
        </div>
      </div>
      <div className="flex h-[18px] shrink-0 items-center pl-5 text-[#111]">
        <span className="w-14 whitespace-pre">1  :  100</span>
        {viewTools.map((t) => (
          <Tool key={t.label} label={t.label} className="w-[21px]">{t.icon}</Tool>
        ))}
        <span className="flex w-5 justify-center"><Chevron d="M6.500 1L3 4.500 6.500 8" /></span>
        <span className="flex flex-1 justify-center pr-1">
          <span className="h-[15px] w-[17px] bg-[#cfd0d3]" />
        </span>
        <Chevron d="M3 1l3.500 3.500L3 8" />
        <span className="ml-3 self-end">
          <Svg w={9} h={9} stroke="#b5b6b8"><path d="M7 1v2M7 4v2M7 7v2M4 4v2M4 7v2M1 7v2" strokeWidth="2" /></Svg>
        </span>
      </div>
    </main>
  );
}

/* ---------- status bar ---------- */

const selectTools: { label: string; icon: ReactNode }[] = [
  { label: "选择链接", icon: <path d="M2 5.500h4a2.500 2.500 0 0 1 0 5H4a2.500 2.500 0 0 1-2-5M8 4.500h3M5 8h5" stroke="#e0a31c" strokeWidth="2" /> },
  { label: "选择基线图元", icon: <path d="M1 9l8-7v7zM1 12.500h9" fill="#e3f1fb" stroke={BLUE} strokeWidth="1.500" /> },
  { label: "选择锁定图元", icon: <path d="M2 2.500h8v2H8v3l2 2H2l2-2v-3H2zM6 10v5" fill="#f4a34b" stroke="#b3551a" /> },
  { label: "按面选择图元", icon: <path d="M2 4l8-3v11l-8 3z" fill="#a9d5f3" stroke={BLUE} /> },
  { label: "选择时拖曳图元", icon: <path d="M7 1v12M1 7h12M5 3l2-2 2 2M5 11l2 2 2-2M3 5L1 7l2 2" stroke="#222" strokeWidth="1.300" /> },
];

function StatusBar() {
  return (
    <footer className="flex h-[25px] shrink-0 items-center border-t border-[#8c8e91] bg-linear-to-b from-[#ececee] to-[#c9cacc] pl-px text-[#111]">
      <span className="flex-1 truncate pt-px">单击可进行选择; 按 Tab 键并单击可选择其他项目; 按 Ctrl 键并单击可将</span>
      <div className="flex gap-0.5">
        {selectTools.map((t, i) => (
          <Tool key={t.label} label={t.label} className="h-[22px] w-6 bg-[#dcdcde]">
            <Svg w={18} h={18}>
              {t.icon}
              {i !== 3 && <RedX x={10} y={1} s={6} />}
              <Arrow x={9} y={6} scale={0.65} />
            </Svg>
          </Tool>
        ))}
      </div>
      <span className="flex w-[110px] items-center pl-0.5">
        <Svg w={18} h={18}><path d="M1.500 2.500h15v2l-5.500 6v6H8v-6l-6.500-6zM2 4.500h14" fill="url(#face)" /></Svg>
        <span className="pt-0.5">:0</span>
      </span>
    </footer>
  );
}

export default function App() {
  return (
    <div className="relative flex h-screen min-h-[560px] flex-col overflow-hidden bg-black font-['Noto_Sans','Noto_Sans_CJK_SC',sans-serif] text-[12px]">
      <svg width="0" height="0" className="absolute" aria-hidden="true">
        <defs>
          <linearGradient id="face" x1="0" y1="0" x2="0" y2="1">
            <stop offset="0" stopColor="#e2e4e8" />
            <stop offset="1" stopColor="#fdfdfd" />
          </linearGradient>
          <linearGradient id="funnel" x1="0" y1="0" x2="1" y2="0">
            <stop offset="0" stopColor="#6d7580" />
            <stop offset=".5" stopColor="#e3e6e9" />
            <stop offset="1" stopColor="#79818b" />
          </linearGradient>
          <linearGradient id="thumb" x1="0" y1="0" x2="1" y2="1">
            <stop offset="0" stopColor="#f4f4f6" />
            <stop offset="1" stopColor="#d2d3d6" />
          </linearGradient>
        </defs>
      </svg>

      <TitleBar />
      <TabRow />
      <AppButton />
      <Ribbon />

      {/* options bar */}
      <div className="relative h-[27px] shrink-0 border-t border-b border-t-[#f4f4f4] border-b-[#8b8d90] bg-[#e3e3e3]">
        <span className="absolute top-[7px] left-[726px] z-10">
          <Svg w={14} h={21}><Arrow x={1} y={1} /></Svg>
        </span>
      </div>

      <div className="flex min-h-0 flex-1 bg-[#f0f0f2]">
        <Properties />
        <Viewport />
      </div>

      <StatusBar />
      <div className="h-1 shrink-0 bg-black" />
    </div>
  );
}
